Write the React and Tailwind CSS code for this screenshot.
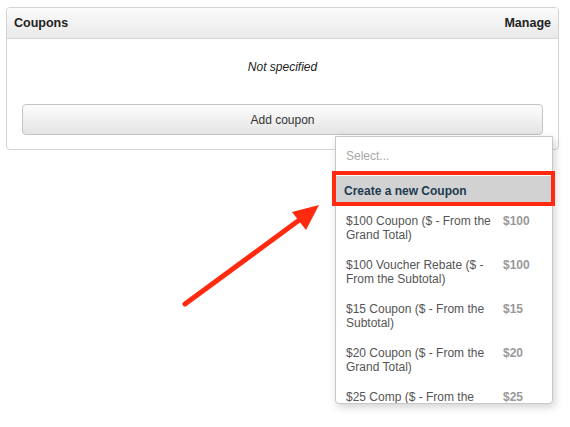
import React from "react";

const options = [
  { label: "$100 Coupon ($ - From the Grand Total)", price: "$100" },
  { label: "$100 Voucher Rebate ($ - From the Subtotal)", price: "$100" },
  { label: "$15 Coupon ($ - From the Subtotal)", price: "$15" },
  { label: "$20 Coupon ($ - From the Grand Total)", price: "$20" },
  { label: "$25 Comp ($ - From the Grand Total)", price: "$25" },
];

export default function App() {
  return (
    <div
      className="relative w-[570px] h-[427px] bg-white overflow-hidden"
      style={{ fontFamily: '"Liberation Sans", Arial, sans-serif' }}
    >
      <div className="pt-[7px] pl-[6px]">
        <div className="w-[553px] h-[143px] border border-[#d4d4d4] rounded-[4px] overflow-hidden flex flex-col">
          <div className="h-[31px] flex items-center justify-between px-[7px] border-b border-[#d4d4d4] bg-gradient-to-b from-[#fbfbfb] to-[#e9e9e9]">
            <span className="text-[12.5px] font-bold text-[#222]">Coupons</span>
            <span className="text-[12.5px] font-bold text-[#222]">Manage</span>
          </div>
          <div className="flex flex-col items-center pt-[21px] px-[15px]">
            <div className="text-[12px] italic text-[#222] leading-[14px]">Not specified</div>
            <div className="mt-[30px] w-[521px] h-[31px] rounded-[4px] border border-[#c4c4c4] bg-gradient-to-b from-[#fdfdfd] to-[#e4e4e4] flex items-center justify-center text-[12px] text-[#333]">
              Add coupon
            </div>
          </div>
        </div>
      </div>

      {/* dropdown */}
      <div className="absolute left-[335px] top-[136px] w-[218px] h-[268px] bg-white border border-[#c8c8c8] rounded-b-[4px] overflow-hidden shadow-[2px_3px_8px_rgba(0,0,0,0.18)]">
        <div className="h-[38px] flex items-center px-[10px] text-[12px] text-[#a9a9a9]">Select...</div>
        <div className="h-[30px] mt-[1px] bg-[#d2d2d2] flex items-center px-[8px] text-[12px] font-bold text-[#1d3a50]">
          Create a new Coupon
        </div>
        {options.map((o) => (
          <div key={o.label} className="flex px-[10px] py-[8px] text-[12px] leading-[14px] text-[#555]">
            <div className="w-[150px]">{o.label}</div>
            <div className="ml-[7px] font-bold text-[#999]">{o.price}</div>
          </div>
        ))}
      </div>

      {/* red highlight */}
      <div className="absolute left-[332px] top-[171px] w-[223px] h-[35px] border-[4px] border-[#ff2a0f]" />

      {/* arrow */}
      <svg className="absolute left-0 top-0" width="570" height="427" viewBox="0 0 570 427">
        <line x1="185" y1="304" x2="302" y2="218" stroke="#ff2a0f" strokeWidth="5" strokeLinecap="round" />
        <polygon points="319,205 292,212 306,230" fill="#ff2a0f" />
      </svg>
    </div>
  );
}
